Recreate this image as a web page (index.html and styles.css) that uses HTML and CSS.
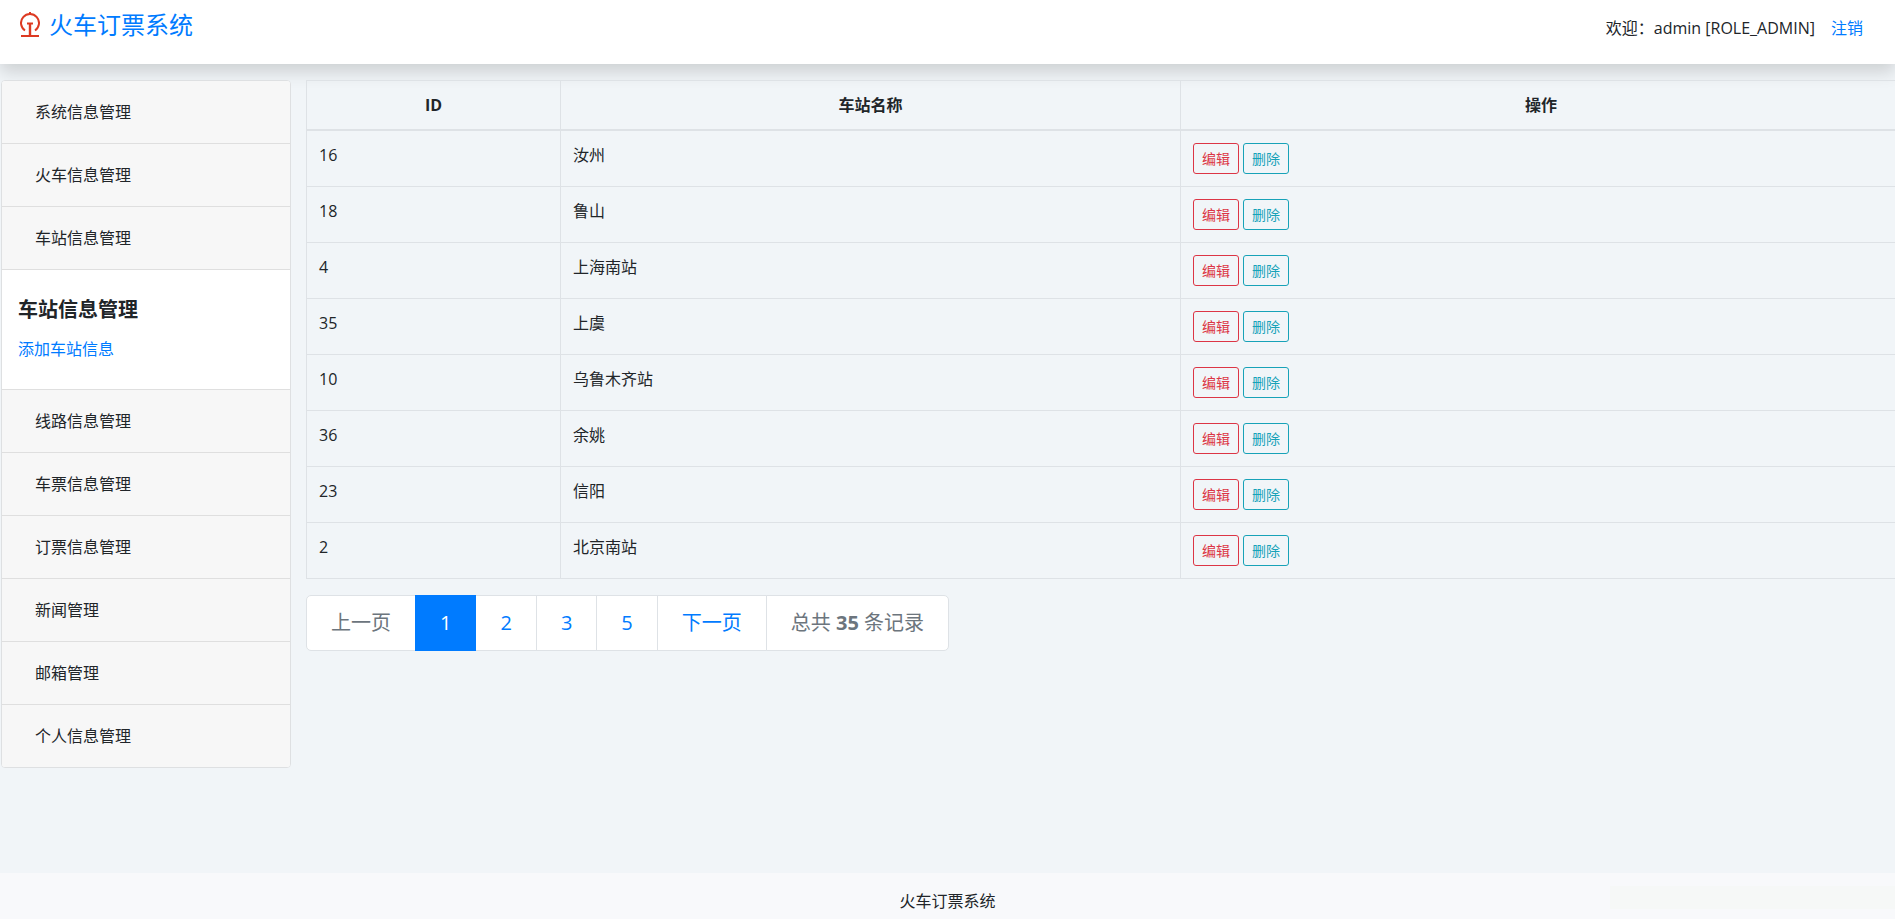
FILE: index.html
```html
<!DOCTYPE html>
<html lang="zh-CN">

	<head>
		<meta charset="UTF-8">
		<title>火车订票系统</title>
		<link rel="stylesheet" href="styles.css">
	</head>

	<body>
		<header class="top">
			<a class="brand" href="#">
				<svg class="logo" viewBox="0 0 20 26" fill="none" stroke="#dd3a22" stroke-width="2">
					<path d="M5 18.5A9 9 0 1 1 15 18.5" />
					<path d="M10 0v3" />
					<path d="M7 11.5h6" />
					<path d="M10 11.5V24" stroke-width="2.4" />
					<path d="M1 24h18" />
				</svg>
				<span>火车订票系统</span>
			</a>
			<div class="user">
				<span>欢迎：admin [ROLE_ADMIN]</span>
				<a href="#">注销</a>
			</div>
		</header>
		<div class="main">
			<aside class="menu">
				<div class="item"><button type="button">系统信息管理</button></div>
				<div class="item"><button type="button">火车信息管理</button></div>
				<div class="item"><button type="button">车站信息管理</button></div>
				<div class="open">
					<h5>车站信息管理</h5>
					<a href="#">添加车站信息</a>
				</div>
				<div class="item"><button type="button">线路信息管理</button></div>
				<div class="item"><button type="button">车票信息管理</button></div>
				<div class="item"><button type="button">订票信息管理</button></div>
				<div class="item"><button type="button">新闻管理</button></div>
				<div class="item"><button type="button">邮箱管理</button></div>
				<div class="item"><button type="button">个人信息管理</button></div>
			</aside>
			<div class="content">
				<table class="station">
					<thead>
						<tr><th class="col-id">ID</th><th class="col-name">车站名称</th><th>操作</th></tr>
					</thead>
					<tbody>
						<tr><td>16</td><td>汝州</td><td><div class="btns"><button type="button" class="edit">编辑</button><button type="button" class="del">删除</button></div></td></tr>
						<tr><td>18</td><td>鲁山</td><td><div class="btns"><button type="button" class="edit">编辑</button><button type="button" class="del">删除</button></div></td></tr>
						<tr><td>4</td><td>上海南站</td><td><div class="btns"><button type="button" class="edit">编辑</button><button type="button" class="del">删除</button></div></td></tr>
						<tr><td>35</td><td>上虞</td><td><div class="btns"><button type="button" class="edit">编辑</button><button type="button" class="del">删除</button></div></td></tr>
						<tr><td>10</td><td>乌鲁木齐站</td><td><div class="btns"><button type="button" class="edit">编辑</button><button type="button" class="del">删除</button></div></td></tr>
						<tr><td>36</td><td>余姚</td><td><div class="btns"><button type="button" class="edit">编辑</button><button type="button" class="del">删除</button></div></td></tr>
						<tr><td>23</td><td>信阳</td><td><div class="btns"><button type="button" class="edit">编辑</button><button type="button" class="del">删除</button></div></td></tr>
						<tr><td>2</td><td>北京南站</td><td><div class="btns"><button type="button" class="edit">编辑</button><button type="button" class="del">删除</button></div></td></tr>
					</tbody>
				</table>
				<ul class="page">
					<li><span>上一页</span></li>
					<li class="active"><a href="#">1</a></li>
					<li><a href="#">2</a></li>
					<li><a href="#">3</a></li>
					<li><a href="#">5</a></li>
					<li><a href="#">下一页</a></li>
					<li><span>总共 <b>35</b> 条记录</span></li>
				</ul>
			</div>
		</div>
		<footer class="foot">火车订票系统</footer>
	</body>

</html>
```

FILE: styles.css
```css
* {
	margin: 0;
	padding: 0;
	box-sizing: border-box;
}

body {
	display: flex;
	flex-direction: column;
	min-height: 100vh;
	overflow-x: hidden;
	background: #f1f5f8;
	color: #212529;
	font-family: "Open Sans", "Noto Sans CJK SC", sans-serif;
	font-size: 16px;
	line-height: 24px;
}

a {
	color: #007bff;
	text-decoration: none;
}

button {
	font-family: inherit;
	background: transparent;
	cursor: pointer;
}

/* 顶部 */
.top {
	display: flex;
	justify-content: space-between;
	align-items: flex-start;
	height: 64px;
	padding: 8px 32px 0 20px;
	background: #fff;
	box-shadow: 0 8px 16px rgba(0, 0, 0, .15);
}

.brand {
	display: flex;
	align-items: center;
	gap: 9px;
	font-size: 24px;
	line-height: 34px;
}

.logo {
	width: 20px;
	height: 26px;
}

.user {
	display: flex;
	gap: 16px;
	padding-top: 8px;
}

.main {
	display: grid;
	grid-template-columns: 290px 1fr;
	gap: 15px;
	flex: 1;
	align-items: start;
	margin: 16px -7px 16px 1px;
}

/* 左侧菜单 */
.menu {
	position: relative;
	background: #fff;
	border: 1px solid #dee0e2;
	border-radius: 4px;
	overflow: hidden;
}

.item {
	padding: 12px 20px;
	background: #f7f7f7;
	border-bottom: 1px solid #dfdfdf;
}

.item:last-child {
	border-bottom: none;
}

.item button {
	display: block;
	padding: 6px 12px;
	border: 1px solid transparent;
	color: #212529;
	font-size: 16px;
	line-height: 24px;
}

.open {
	padding: 24px 16px 28px;
	border-bottom: 1px solid #dfdfdf;
}

.open h5 {
	margin-bottom: 11px;
	font-size: 20px;
	line-height: 32px;
}

.open a {
	display: block;
}

/* 车站列表 */
.station {
	width: 100%;
	table-layout: fixed;
	border-collapse: collapse;
}

.station th,
.station td {
	padding: 12px;
	border: 1px solid #dee2e6;
	vertical-align: top;
}

.station th {
	border-bottom-width: 2px;
}

.col-id {
	width: 254px;
}

.col-name {
	width: 620px;
}

.btns {
	display: flex;
	gap: 4px;
}

.btns button {
	padding: 4px 8px;
	border: 1px solid;
	border-radius: 3px;
	font-size: 14px;
	line-height: 21px;
}

.edit {
	color: #dc3545;
}

.del {
	color: #17a2b8;
}

/* 分页 */
.page {
	display: flex;
	margin-top: 16px;
	list-style: none;
	font-size: 20px;
	line-height: 30px;
}

.page li > * {
	display: block;
	padding: 12px 24px;
	margin-left: -1px;
	background: #fff;
	border: 1px solid #dee2e6;
}

.page span {
	color: #6c757d;
}

.page li:first-child span {
	margin-left: 0;
	border-radius: 5px 0 0 5px;
}

.page li:last-child span {
	border-radius: 0 5px 5px 0;
}

.page .active a {
	position: relative;
	background: #007bff;
	border-color: #007bff;
	color: #fff;
}

/* 底部 */
.foot {
	position: relative;
	padding: 16px 0 6px;
	background: #f8f9fb;
	text-align: center;
}

.foot::after {
	content: "";
	position: absolute;
	top: 13px;
	right: 0;
	width: 285px;
	height: 23px;
	background: #f6f8f7;
}
```
